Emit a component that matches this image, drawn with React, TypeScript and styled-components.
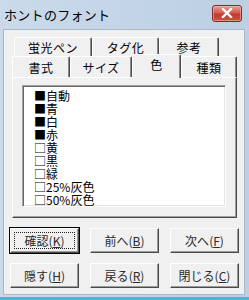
import React from 'react';
import styled, { createGlobalStyle } from 'styled-components';

const GlobalStyle = createGlobalStyle`
  html, body { margin: 0; padding: 0; background: #c5d6e8; }
  body { font-family: "Noto Sans CJK JP", "Noto Sans", sans-serif; }
  * { box-sizing: border-box; }
`;

const Window = styled.div`
  width: 249px;
  height: 300px;
  display: flex;
  flex-direction: column;
  background: linear-gradient(to right, #cadaeb, #bccfe3);
  border-bottom: 3px solid #5aaed0;
  overflow: hidden;
`;

const TitleBar = styled.div`
  height: 29px;
  flex: none;
  display: flex;
  align-items: center;
  justify-content: space-between;
  padding: 0 7px 0 4px;
`;

const Title = styled.span`
  font-size: 13px;
  line-height: 1;
  color: #000;
  letter-spacing: 0.3px;
  margin-top: -1px;
`;

const CloseButton = styled.div`
  width: 30px;
  height: 17px;
  margin-top: -3px;
  border-radius: 3px;
  border: 1px solid #7a2e26;
  background: linear-gradient(#e7a095, #d35c4f 45%, #c03b2c 55%, #cc5440);
  display: flex;
  align-items: center;
  justify-content: center;
  box-shadow: inset 0 0 0 1px rgba(255, 200, 190, 0.5);
`;

const Body = styled.div`
  flex: 1;
  margin: 0 4px 2px 3px;
  background: #f0f0f0;
  border: 1px solid #a9b8c8;
  display: flex;
  flex-direction: column;
  padding-top: 7px;
`;

const TabControl = styled.div`
  margin-left: 8px;
  width: 225px;
  display: flex;
  flex-direction: column;
`;

const TabRow = styled.div<{ $h: number; $indent: number }>`
  display: flex;
  height: ${(p) => p.$h}px;
  padding-left: ${(p) => p.$indent}px;
`;

const Tab = styled.div<{ $w: number; $selected?: boolean }>`
  position: relative;
  width: ${(p) => p.$w}px;
  height: ${(p) => (p.$selected ? 'calc(100% + 3px)' : '100%')};
  margin-top: ${(p) => (p.$selected ? '-2px' : '0')};
  z-index: ${(p) => (p.$selected ? 1 : 0)};
  border-top: 1px solid #fff;
  border-left: 1px solid #fff;
  border-right: 1px solid #4a4a4a;
  box-shadow: inset -1px 0 #8c8c8c;
  border-radius: 2px 2px 0 0;
  background: #f0f0f0;
  display: flex;
  align-items: center;
  justify-content: center;
  padding-bottom: ${(p) => (p.$selected ? '5px' : '0')};
  font-size: 12px;
  letter-spacing: 0.5px;
  color: #000;
`;

const Panel = styled.div`
  height: 141px;
  border-top: 1px solid #fff;
  border-left: 1px solid #fff;
  border-right: 1px solid #4a4a4a;
  border-bottom: 1px solid #4a4a4a;
  box-shadow: inset -1px -1px #a0a0a0;
  padding: 7px 10px 10px 9px;
  display: flex;
`;

const ListBox = styled.div`
  flex: 1;
  background: #fff;
  border-top: 1px solid #a0a0a0;
  border-left: 1px solid #a0a0a0;
  border-right: 1px solid #fff;
  border-bottom: 1px solid #fff;
  box-shadow: inset 1px 1px #696969, inset -1px -1px #e3e3e3;
  padding: 3px 0 0 11px;
  display: flex;
  flex-direction: column;
`;

const Item = styled.div`
  font-size: 12px;
  line-height: 13px;
  height: 13px;
  color: #000;
  white-space: nowrap;
`;

const ButtonGrid = styled.div`
  display: grid;
  grid-template-columns: repeat(3, 69px);
  column-gap: 11px;
  row-gap: 10px;
  margin: 10px 0 0 6px;
`;

const Button = styled.button<{ $default?: boolean }>`
  height: 25px;
  padding: 3px;
  margin: 0;
  background: #f0f0f0;
  border: 1px solid;
  border-color: #fff #4a4a4a #4a4a4a #fff;
  box-shadow: inset -1px -1px #9a9a9a ${(p) => (p.$default ? ', 0 0 0 1px #000' : '')};
  font-family: "Noto Sans CJK JP", "Noto Sans", sans-serif;
  font-size: 12px;
  color: #2a2a2a;
  display: flex;
  align-items: stretch;
`;

const Label = styled.span<{ $focus?: boolean }>`
  flex: 1;
  display: flex;
  align-items: center;
  justify-content: center;
  line-height: 1;
  border: 1px dotted ${(p) => (p.$focus ? '#222' : 'transparent')};
  u { text-underline-offset: 1px; }
`;

const backTabs = [
  { label: '蛍光ペン', w: 78 },
  { label: 'タグ化', w: 67 },
  { label: '参考', w: 60 },
];

const frontTabs = [
  { label: '書式', w: 58 },
  { label: 'サイズ', w: 62 },
  { label: '色', w: 49, selected: true },
  { label: '種類', w: 56 },
];

const items = [
  { mark: '■', text: '自動' },
  { mark: '■', text: '青' },
  { mark: '■', text: '白' },
  { mark: '■', text: '赤' },
  { mark: '□', text: '黄' },
  { mark: '□', text: '黒' },
  { mark: '□', text: '緑' },
  { mark: '□', text: '25%灰色' },
  { mark: '□', text: '50%灰色' },
];

const buttons = [
  { text: '確認', key: 'K', def: true },
  { text: '前へ', key: 'B' },
  { text: '次へ', key: 'F' },
  { text: '隠す', key: 'H' },
  { text: '戻る', key: 'R' },
  { text: '閉じる', key: 'C' },
];

export default function App() {
  return (
    <>
      <GlobalStyle />
      <Window>
        <TitleBar>
          <Title>ホントのフォント</Title>
          <CloseButton>
            <svg width="12" height="10" viewBox="0 0 12 10">
              <path d="M2 1 L10 9 M10 1 L2 9" stroke="#fff" strokeWidth="2.4" strokeLinecap="square" />
            </svg>
          </CloseButton>
        </TitleBar>
        <Body>
          <TabControl>
            <TabRow $h={19} $indent={2}>
              {backTabs.map((t) => (
                <Tab key={t.label} $w={t.w}>{t.label}</Tab>
              ))}
            </TabRow>
            <TabRow $h={21} $indent={0}>
              {frontTabs.map((t) => (
                <Tab key={t.label} $w={t.w} $selected={t.selected}>{t.label}</Tab>
              ))}
            </TabRow>
            <Panel>
              <ListBox>
                {items.map((it) => (
                  <Item key={it.text}>{it.mark}{it.text}</Item>
                ))}
              </ListBox>
            </Panel>
          </TabControl>
          <ButtonGrid>
            {buttons.map((b) => (
              <Button key={b.key} $default={b.def}>
                <Label $focus={b.def}>
                  {b.text}(<u>{b.key}</u>)
                </Label>
              </Button>
            ))}
          </ButtonGrid>
        </Body>
      </Window>
    </>
  );
}
